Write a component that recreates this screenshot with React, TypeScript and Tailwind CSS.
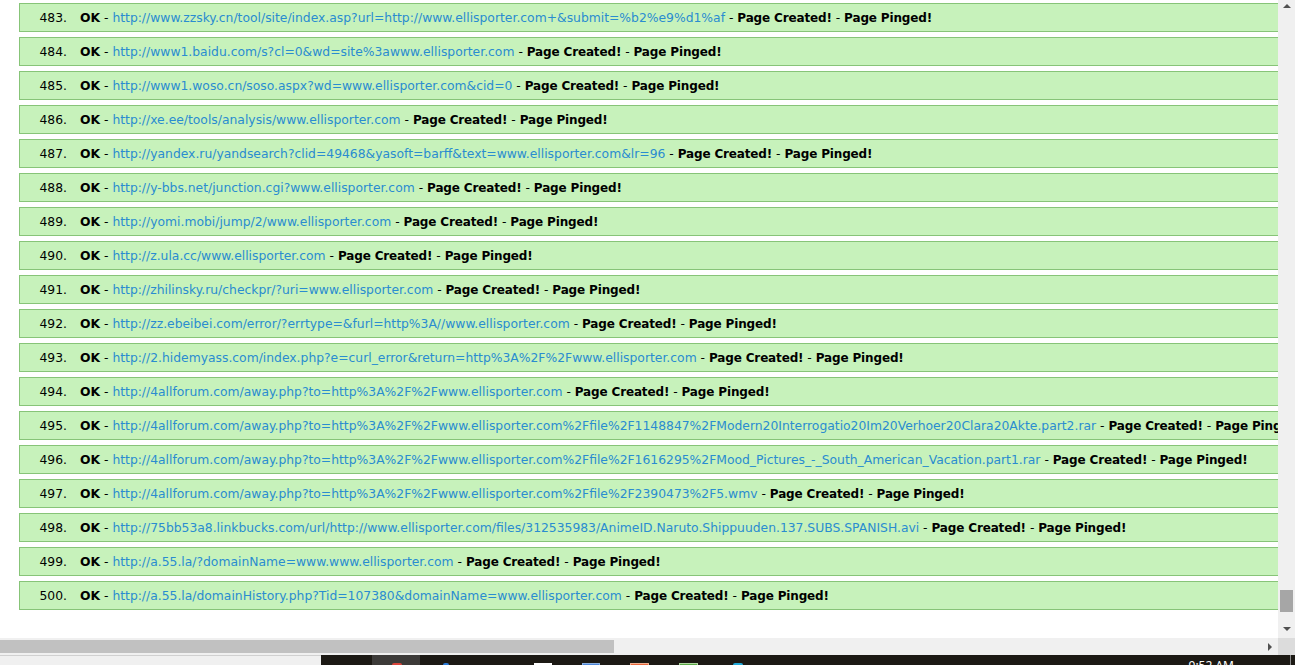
const rows: [number, string][] = [
  [483, "http://www.zzsky.cn/tool/site/index.asp?url=http://www.ellisporter.com+&submit=%b2%e9%d1%af"],
  [484, "http://www1.baidu.com/s?cl=0&wd=site%3awww.ellisporter.com"],
  [485, "http://www1.woso.cn/soso.aspx?wd=www.ellisporter.com&cid=0"],
  [486, "http://xe.ee/tools/analysis/www.ellisporter.com"],
  [487, "http://yandex.ru/yandsearch?clid=49468&yasoft=barff&text=www.ellisporter.com&lr=96"],
  [488, "http://y-bbs.net/junction.cgi?www.ellisporter.com"],
  [489, "http://yomi.mobi/jump/2/www.ellisporter.com"],
  [490, "http://z.ula.cc/www.ellisporter.com"],
  [491, "http://zhilinsky.ru/checkpr/?uri=www.ellisporter.com"],
  [492, "http://zz.ebeibei.com/error/?errtype=&furl=http%3A//www.ellisporter.com"],
  [493, "http://2.hidemyass.com/index.php?e=curl_error&return=http%3A%2F%2Fwww.ellisporter.com"],
  [494, "http://4allforum.com/away.php?to=http%3A%2F%2Fwww.ellisporter.com"],
  [495, "http://4allforum.com/away.php?to=http%3A%2F%2Fwww.ellisporter.com%2Ffile%2F1148847%2FModern20Interrogatio20Im20Verhoer20Clara20Akte.part2.rar"],
  [496, "http://4allforum.com/away.php?to=http%3A%2F%2Fwww.ellisporter.com%2Ffile%2F1616295%2FMood_Pictures_-_South_American_Vacation.part1.rar"],
  [497, "http://4allforum.com/away.php?to=http%3A%2F%2Fwww.ellisporter.com%2Ffile%2F2390473%2F5.wmv"],
  [498, "http://75bb53a8.linkbucks.com/url/http://www.ellisporter.com/files/312535983/AnimeID.Naruto.Shippuuden.137.SUBS.SPANISH.avi"],
  [499, "http://a.55.la/?domainName=www.www.ellisporter.com"],
  [500, "http://a.55.la/domainHistory.php?Tid=107380&domainName=www.ellisporter.com"],
]

function Row({ n, url }: { n: number; url: string }) {
  return (
    <div className="ml-[19px] mb-[5px] flex h-[29px] w-[1420px] shrink-0 items-center whitespace-nowrap border border-[#87c478] bg-[#c7f2bb] text-[12.35px] leading-[16px] text-black">
      <span className="inline-block w-[47px] text-right">{n}.</span>
      <span className="ml-[13px]">
        <b>OK</b> - <a className="text-[#2a8cd0]">{url}</a> -{" "}
        <b className="text-[12px] tracking-[-0.15px]">Page Created!</b> -{" "}
        <b className="text-[12px] tracking-[-0.15px]">Page Pinged!</b>
      </span>
    </div>
  )
}

export default function App() {
  return (
    <div className="flex h-[665px] w-[1295px] flex-col overflow-hidden bg-white font-['DejaVu_Sans',sans-serif]">
      {/* page + vertical scrollbar */}
      <div className="flex h-[638px]">
        <div className="flex flex-1 flex-col overflow-hidden pt-[3px]">
          {rows.map(([n, url]) => (
            <Row key={n} n={n} url={url} />
          ))}
        </div>
        <div className="flex w-[17px] flex-col items-center bg-[#f0f0f0]">
          <div className="mt-[4px] h-0 w-0 border-x-[4px] border-b-[4px] border-x-transparent border-b-[#505050]" />
          <div className="flex-1" />
          <div className="h-[22px] w-[13px] bg-[#a6a6a6]" />
          <div className="mt-[15px] mb-[7px] h-0 w-0 border-x-[4px] border-t-[4px] border-x-transparent border-t-[#505050]" />
        </div>
      </div>

      {/* horizontal scrollbar */}
      <div className="flex h-[17px]">
        <div className="flex flex-1 items-center bg-[#f0f0f0]">
          <div className="h-[13px] w-[614px] bg-[#c1c1c1]" />
          <div className="flex-1" />
          <div className="mr-[6px] h-0 w-0 border-y-[4px] border-l-[4px] border-y-transparent border-l-[#505050]" />
        </div>
        <div className="w-[17px] bg-[#dcdcdc]" />
      </div>

      {/* taskbar */}
      <div className="flex h-[10px] overflow-hidden">
        <div className="w-[321px] border-t border-[#d0d0d0] bg-[#f0f0f0]" />
        <div className="flex flex-1 bg-[#1c1914]">
          <div className="ml-[51px] w-[48px] bg-[#3c3a38] pt-[8px]">
            <div className="ml-[20px] h-[2px] w-[10px] rounded-t-full bg-[#d9443a]" />
          </div>
          <div className="ml-[23px] mt-[8px] h-[2px] w-[6px] rounded-t-full bg-[#2a7ad6]" />
          <div className="ml-[85px] mt-[8px] h-[2px] w-[18px] bg-white" />
          <div className="ml-[30px] mt-[8px] h-[2px] w-[18px] border-x border-t border-[#8ab0e0] bg-[#4d86d8]" />
          <div className="ml-[30px] mt-[8px] h-[2px] w-[19px] border-x border-t border-[#f0b090] bg-[#e8663a]" />
          <div className="ml-[30px] mt-[8px] h-[2px] w-[19px] border-x border-t border-[#b0d8a0] bg-[#5aa846]" />
          <div className="ml-[35px] mt-[8px] h-[2px] w-[10px] rounded-t-full bg-[#20a8d8]" />
          <div className="flex-1" />
          <div className="mr-[56px] pt-[4px] text-[12px] leading-[14px] text-white font-['Noto_Sans',sans-serif]">9:52 AM</div>
          <div className="mr-[4px] w-px bg-[#8a8a8a]" />
        </div>
      </div>
    </div>
  )
}
